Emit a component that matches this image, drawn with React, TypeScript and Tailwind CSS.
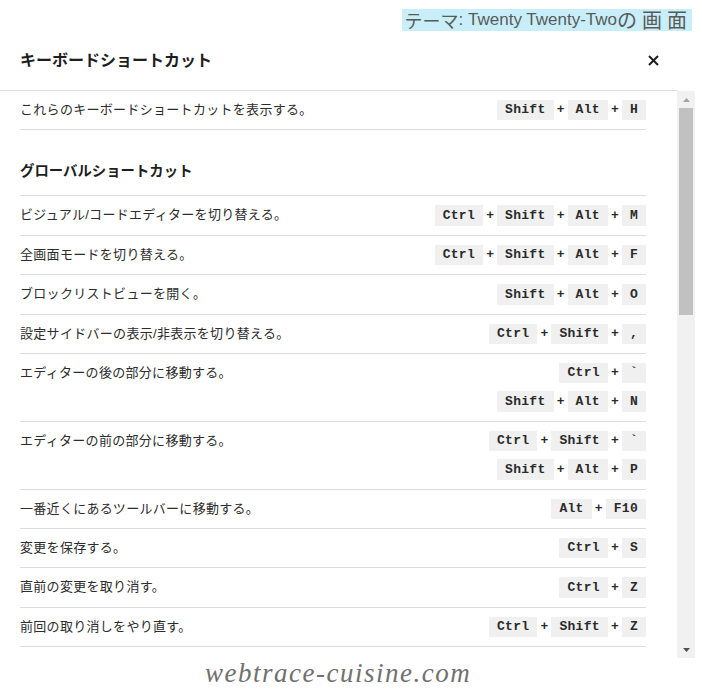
import React from 'react';

type Row = { label: string; keys: string[][] };

const general: Row[] = [
  { label: 'これらのキーボードショートカットを表示する。', keys: [['Shift', 'Alt', 'H']] },
];

const globalRows: Row[] = [
  { label: 'ビジュアル/コードエディターを切り替える。', keys: [['Ctrl', 'Shift', 'Alt', 'M']] },
  { label: '全画面モードを切り替える。', keys: [['Ctrl', 'Shift', 'Alt', 'F']] },
  { label: 'ブロックリストビューを開く。', keys: [['Shift', 'Alt', 'O']] },
  { label: '設定サイドバーの表示/非表示を切り替える。', keys: [['Ctrl', 'Shift', ',']] },
  { label: 'エディターの後の部分に移動する。', keys: [['Ctrl', '`'], ['Shift', 'Alt', 'N']] },
  { label: 'エディターの前の部分に移動する。', keys: [['Ctrl', 'Shift', '`'], ['Shift', 'Alt', 'P']] },
  { label: '一番近くにあるツールバーに移動する。', keys: [['Alt', 'F10']] },
  { label: '変更を保存する。', keys: [['Ctrl', 'S']] },
  { label: '直前の変更を取り消す。', keys: [['Ctrl', 'Z']] },
  { label: '前回の取り消しをやり直す。', keys: [['Ctrl', 'Shift', 'Z']] },
];

const jp = "font-['Liberation_Sans','Noto_Sans_CJK_JP',sans-serif]";
const mono = "font-['Liberation_Mono','Noto_Sans_CJK_JP',monospace]";

function Combo({ keys }: { keys: string[] }) {
  return (
    <div className="flex items-center">
      {keys.map((k, i) => (
        <React.Fragment key={i}>
          {i > 0 && (
            <span className={`${mono} w-[14px] text-center text-[13px] font-bold text-[#2a2a2a]`}>+</span>
          )}
          <kbd
            className={`${mono} flex h-[20.4px] items-center bg-[#f0f0f0] px-2 text-[13px] font-bold tracking-[0.3px] text-[#2a2a2a]`}
          >
            {k}
          </kbd>
        </React.Fragment>
      ))}
    </div>
  );
}

function ShortcutRow({ row, className }: { row: Row; className: string }) {
  return (
    <li className={`flex items-start justify-between py-[9px] ${className}`}>
      <span className={`${jp} text-[13px] leading-[20.4px] tracking-[0.3px] text-[#2c2c2c]`}>{row.label}</span>
      <div className="flex flex-col items-end gap-[8px]">
        {row.keys.map((combo, i) => (
          <Combo key={i} keys={combo} />
        ))}
      </div>
    </li>
  );
}

export default function App() {
  return (
    <div className="h-[697px] w-[702px] overflow-hidden bg-white">
      {/* caption label */}
      <div className="flex justify-end pr-[10px] pt-[9px]">
        <div className="flex h-[22px] items-center bg-[#c8eff9] pl-[3px] text-[17px] text-[#5a5a5a]">
          <span className="font-['Noto_Sans_CJK_JP',sans-serif] text-[18px]">テーマ</span>
          <span className="font-['Liberation_Sans',sans-serif]">:&nbsp;Twenty Twenty-Two</span>
          <span className="font-['Noto_Sans_CJK_JP',sans-serif] text-[20px] tracking-[5px]">の画面</span>
        </div>
      </div>

      {/* modal header */}
      <div className="flex h-[60px] w-[678px] items-center justify-between border-b border-[#e0e0e0] pl-[20px] pr-[20px]">
        <h1 className={`${jp} text-[16px] font-bold text-[#1e1e1e]`}>キーボードショートカット</h1>
        <svg width="11" height="11" viewBox="0 0 11 11" className="mr-[-1px]">
          <path d="M1 1L10 10M10 1L1 10" stroke="#1e1e1e" strokeWidth="2" />
        </svg>
      </div>

      <div className="flex h-[567px] w-[695px]">
        {/* modal body */}
        <div className="h-full w-[677px] overflow-hidden pl-[20px] pr-[31px]">
          <ul>
            {general.map((r, i) => (
              <ShortcutRow key={i} row={r} className="border-b border-[#dddddd]" />
            ))}
          </ul>
          <h2 className={`${jp} pb-[14px] pt-[31px] text-[14.4px] font-bold leading-[20px] text-[#1e1e1e]`}>
            グローバルショートカット
          </h2>
          <ul>
            {globalRows.map((r, i) => (
              <ShortcutRow
                key={i}
                row={r}
                className={`border-t border-[#dddddd] ${i === globalRows.length - 1 ? 'border-b' : ''}`}
              />
            ))}
          </ul>
        </div>

        {/* scrollbar */}
        <div className="flex h-full w-[18px] flex-col items-center bg-[#f1f1f1]">
          <div className="flex h-[17px] w-full items-center justify-center">
            <svg width="7" height="4" viewBox="0 0 7 4">
              <path d="M3.5 0L7 4H0Z" fill="#a3a3a3" />
            </svg>
          </div>
          <div className="h-[207px] w-[14px] bg-[#c1c1c1]" />
          <div className="flex-1" />
          <div className="flex h-[17px] w-full items-center justify-center">
            <svg width="7" height="4" viewBox="0 0 7 4">
              <path d="M0 0H7L3.5 4Z" fill="#505050" />
            </svg>
          </div>
        </div>
      </div>

      {/* site mark */}
      <div className="pl-[205px]">
        <span className="font-['Liberation_Serif',serif] text-[27px] italic leading-[30px] tracking-[1.5px] text-[#707070]">
          webtrace-cuisine.com
        </span>
      </div>
    </div>
  );
}
